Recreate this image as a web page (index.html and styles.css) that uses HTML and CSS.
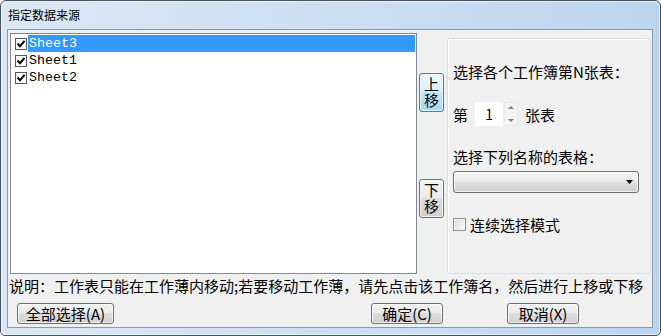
FILE: index.html
```html
<!DOCTYPE html>
<html lang="zh-CN">
<head>
    <meta charset="UTF-8">
    <title>指定数据来源</title>
    <link rel="stylesheet" href="styles.css">
</head>
<body>

    <div class="window">
        <div class="titlebar">指定数据来源</div>

        <div class="client">
            <div class="main">
                <div class="sheet-list">
                    <div class="row">
                        <svg class="chk" width="12" height="12" viewBox="0 0 12 12"><rect x="0.5" y="0.5" width="11" height="11" fill="#fff" stroke="#5a5a5a"/><path d="M2.5 5.5 L5 8.2 L9.6 2.8" fill="none" stroke="#000" stroke-width="2"/></svg>
                        <span class="name selected">Sheet3</span>
                    </div>
                    <div class="row">
                        <svg class="chk" width="12" height="12" viewBox="0 0 12 12"><rect x="0.5" y="0.5" width="11" height="11" fill="#fff" stroke="#5a5a5a"/><path d="M2.5 5.5 L5 8.2 L9.6 2.8" fill="none" stroke="#000" stroke-width="2"/></svg>
                        <span class="name">Sheet1</span>
                    </div>
                    <div class="row">
                        <svg class="chk" width="12" height="12" viewBox="0 0 12 12"><rect x="0.5" y="0.5" width="11" height="11" fill="#fff" stroke="#5a5a5a"/><path d="M2.5 5.5 L5 8.2 L9.6 2.8" fill="none" stroke="#000" stroke-width="2"/></svg>
                        <span class="name">Sheet2</span>
                    </div>
                </div>

                <div class="move-col">
                    <button type="button" class="btn move up focused"><span class="vlabel">上移</span></button>
                    <button type="button" class="btn move down"><span class="vlabel">下移</span></button>
                </div>

                <div class="panel">
                    <div class="p-label first">选择各个工作簿第N张表：</div>
                    <div class="spin-row">
                        <span>第</span>
                        <span class="spin-box">1</span>
                        <svg class="spin-arrows" width="14" height="24" viewBox="0 0 14 24">
                            <rect x="0.5" y="0.5" width="13" height="23" fill="#f4f4f4" stroke="#e6e6e6"/>
                            <path d="M4 7 L7 4 L10 7 Z" fill="#7d7d7d"/>
                            <path d="M4 17 L7 20 L10 17 Z" fill="#7d7d7d"/>
                        </svg>
                        <span class="spin-unit">张表</span>
                    </div>
                    <div class="p-label second">选择下列名称的表格：</div>
                    <div class="select">
                        <svg width="7" height="4" viewBox="0 0 7 4"><path d="M0 0 L7 0 L3.5 4 Z" fill="#000"/></svg>
                    </div>
                    <div class="check-row">
                        <span class="box"></span>
                        <span>连续选择模式</span>
                    </div>
                </div>
            </div>

            <div class="note">说明：工作表只能在工作薄内移动;若要移动工作薄，请先点击该工作簿名，然后进行上移或下移</div>

            <div class="actions">
                <button type="button" class="btn all">全部选择(A)</button>
                <button type="button" class="btn ok">确定(C)</button>
                <button type="button" class="btn cancel">取消(X)</button>
            </div>
        </div>
    </div>

</body>
</html>
```

FILE: styles.css
```css
* {
    box-sizing: border-box;
}
body {
    margin: 0;
    padding: 0;
    font-family: "Noto Sans CJK SC", sans-serif;
    font-size: 15px;
    color: #000;
    background-color: #fff;
}
.window {
    width: 661px;
    height: 336px;
    border: 1px solid #46525f;
    border-radius: 6px 6px 5px 5px;
    background-image: linear-gradient(to right, #dce7f4, #cbdef2 55%, #bcd5ef);
    box-shadow: inset 0 0 0 1px rgba(255, 255, 255, 0.6);
    padding: 0 7px 7px 6px;
    display: flex;
    flex-direction: column;
}
.titlebar {
    height: 28px;
    line-height: 28px;
    font-size: 12px;
    padding-left: 1px;
    flex-shrink: 0;
}
.client {
    flex: 1;
    background-color: #f0f0f0;
    border: 1px solid #8a9aae;
    padding-top: 3px;
}

/* top area */
.main {
    display: flex;
    height: 241px;
    margin-left: 2px;
}
.sheet-list {
    width: 407px;
    height: 241px;
    border: 1px solid #828790;
    background-color: #fff;
    padding: 1px 1px 0 0;
}
.row {
    display: flex;
    align-items: center;
    height: 17px;
    padding-left: 4px;
}
.chk {
    flex-shrink: 0;
    margin-right: 1px;
}
.name {
    flex: 1;
    height: 17px;
    line-height: 17px;
    padding-left: 1px;
    font-family: "Liberation Mono", monospace;
    font-size: 13.3px;
}
.name.selected {
    background-color: #3399ff;
    color: #fff;
}

.move-col {
    width: 25px;
    margin-left: 2px;
    display: flex;
    flex-direction: column;
}
.btn {
    font-family: "Noto Sans CJK SC", sans-serif;
    font-size: 15px;
    color: #000;
    padding: 0;
    border: 1px solid #707070;
    border-radius: 3px;
    background-image: linear-gradient(#f2f2f2 0%, #ebebeb 49%, #dddddd 50%, #cfcfcf 100%);
    box-shadow: inset 0 0 0 1px rgba(255, 255, 255, 0.7);
}
.btn.move {
    width: 25px;
    height: 39px;
    display: flex;
    align-items: center;
    justify-content: center;
}
.vlabel {
    writing-mode: vertical-rl;
    letter-spacing: 1px;
    line-height: 17px;
}
.btn.up {
    margin-top: 40px;
}
.btn.down {
    margin-top: 67px;
}
.btn.focused {
    border-color: #3c7fb1;
    background-image: linear-gradient(#eaf6fd 0%, #d9f0fc 49%, #bee6fd 50%, #a7d9f5 100%);
}

.panel {
    width: 204px;
    height: 236px;
    margin-left: 3px;
    margin-top: 5px;
    border: 1px solid #d5dfe5;
    border-radius: 3px;
    box-shadow: inset 1px 1px 0 #fff;
    padding-left: 5px;
}
.p-label {
    line-height: 17px;
    height: 17px;
}
.p-label.first {
    margin-top: 24px;
}
.p-label.second {
    margin-top: 22px;
}
.spin-row {
    display: flex;
    align-items: center;
    height: 24px;
    margin-top: 22px;
}
.spin-box {
    width: 28px;
    height: 24px;
    line-height: 24px;
    margin-left: 7px;
    background-color: #fff;
    text-align: center;
    font-size: 14px;
}
.spin-arrows {
    margin-left: 1px;
}
.spin-unit {
    margin-left: 7px;
}
.select {
    width: 186px;
    height: 22px;
    margin-top: 6px;
    border: 1px solid #707070;
    border-radius: 3px;
    background-image: linear-gradient(#f2f2f2 0%, #ebebeb 49%, #dddddd 50%, #cfcfcf 100%);
    box-shadow: inset 0 0 0 1px rgba(255, 255, 255, 0.7);
    display: flex;
    align-items: center;
    justify-content: flex-end;
    padding-right: 5px;
}
.check-row {
    display: flex;
    align-items: center;
    height: 17px;
    margin-top: 23px;
}
.check-row .box {
    width: 13px;
    height: 13px;
    margin-right: 4px;
    border: 1px solid #8e8f8f;
    background-image: linear-gradient(135deg, #dcdcdc, #fbfbfb);
    box-shadow: inset 0 0 0 1px #f4f4f4;
}

/* bottom area */
.note {
    margin-top: 3px;
    height: 17px;
    line-height: 17px;
    padding-left: 1px;
    white-space: nowrap;
}
.actions {
    display: flex;
    margin-top: 9px;
    padding-left: 9px;
}
.actions .btn {
    height: 21px;
    line-height: 19px;
}
.btn.all {
    width: 97px;
}
.btn.ok {
    width: 72px;
    margin-left: 257px;
}
.btn.cancel {
    width: 72px;
    margin-left: 64px;
}
```
